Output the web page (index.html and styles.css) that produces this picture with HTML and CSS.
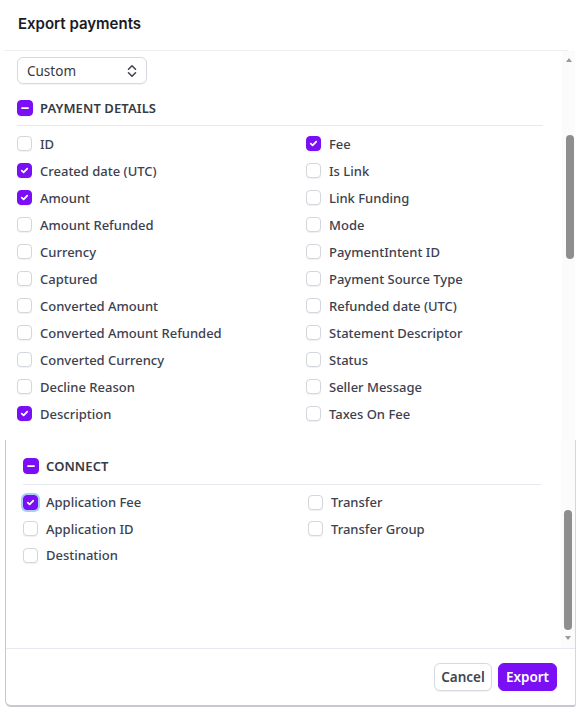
FILE: index.html
```html
<!DOCTYPE html>
<html>
<head>
<meta charset="utf-8">
<link rel="stylesheet" href="styles.css">
</head>
<body>
<div class="page">
  <div class="header"><h1 class="title">Export payments</h1></div>
  <div class="top">
    <div class="top-content">
      <div class="select">
        <span>Custom</span>
        <svg class="chev" width="12" height="14" viewBox="0 0 12 14"><path d="M2.5 5.2 6 1.8l3.5 3.4M2.5 8.8 6 12.2l3.5-3.4" fill="none" stroke="#414552" stroke-width="1.6" stroke-linecap="round" stroke-linejoin="round"/></svg>
      </div>
      <div class="section-head">
        <span class="box minus"><svg width="16" height="16" viewBox="0 0 16 16"><path d="M4.5 8h7" stroke="#fff" stroke-width="2" stroke-linecap="round"/></svg></span>
        <span class="section-title">PAYMENT DETAILS</span>
      </div>
      <div class="rule"></div>
      <div class="grid top-grid">
        <div class="col">
          <label class="row"><span class="box"></span>ID</label>
          <label class="row"><span class="box on"><svg width="15" height="15" viewBox="0 0 15 15"><path d="M4.3 7.6l2.2 2.1 4.2-4.4" fill="none" stroke="#fff" stroke-width="2" stroke-linecap="round" stroke-linejoin="round"/></svg></span>Created date (UTC)</label>
          <label class="row"><span class="box on"><svg width="15" height="15" viewBox="0 0 15 15"><path d="M4.3 7.6l2.2 2.1 4.2-4.4" fill="none" stroke="#fff" stroke-width="2" stroke-linecap="round" stroke-linejoin="round"/></svg></span>Amount</label>
          <label class="row"><span class="box"></span>Amount Refunded</label>
          <label class="row"><span class="box"></span>Currency</label>
          <label class="row"><span class="box"></span>Captured</label>
          <label class="row"><span class="box"></span>Converted Amount</label>
          <label class="row"><span class="box"></span>Converted Amount Refunded</label>
          <label class="row"><span class="box"></span>Converted Currency</label>
          <label class="row"><span class="box"></span>Decline Reason</label>
          <label class="row"><span class="box on"><svg width="15" height="15" viewBox="0 0 15 15"><path d="M4.3 7.6l2.2 2.1 4.2-4.4" fill="none" stroke="#fff" stroke-width="2" stroke-linecap="round" stroke-linejoin="round"/></svg></span>Description</label>
        </div>
        <div class="col">
          <label class="row"><span class="box on"><svg width="15" height="15" viewBox="0 0 15 15"><path d="M4.3 7.6l2.2 2.1 4.2-4.4" fill="none" stroke="#fff" stroke-width="2" stroke-linecap="round" stroke-linejoin="round"/></svg></span>Fee</label>
          <label class="row"><span class="box"></span>Is Link</label>
          <label class="row"><span class="box"></span>Link Funding</label>
          <label class="row"><span class="box"></span>Mode</label>
          <label class="row"><span class="box"></span>PaymentIntent ID</label>
          <label class="row"><span class="box"></span>Payment Source Type</label>
          <label class="row"><span class="box"></span>Refunded date (UTC)</label>
          <label class="row"><span class="box"></span>Statement Descriptor</label>
          <label class="row"><span class="box"></span>Status</label>
          <label class="row"><span class="box"></span>Seller Message</label>
          <label class="row"><span class="box"></span>Taxes On Fee</label>
        </div>
      </div>
    </div>
    <div class="scrollbar top-bar">
      <span class="arrow up"></span>
      <span class="thumb top-thumb"></span>
    </div>
  </div>
  <div class="bottom">
    <div class="bottom-scroll">
      <div class="bottom-content">
        <div class="section-head">
          <span class="box minus"><svg width="16" height="16" viewBox="0 0 16 16"><path d="M4.5 8h7" stroke="#fff" stroke-width="2" stroke-linecap="round"/></svg></span>
          <span class="section-title">CONNECT</span>
        </div>
        <div class="rule rule-b"></div>
        <div class="grid bottom-grid">
          <div class="col">
            <label class="row rb"><span class="box on focus"><svg width="15" height="15" viewBox="0 0 15 15"><path d="M4.3 7.6l2.2 2.1 4.2-4.4" fill="none" stroke="#fff" stroke-width="2" stroke-linecap="round" stroke-linejoin="round"/></svg></span>Application Fee</label>
            <label class="row rb"><span class="box"></span>Application ID</label>
            <label class="row rb"><span class="box"></span>Destination</label>
          </div>
          <div class="col">
            <label class="row rb"><span class="box"></span>Transfer</label>
            <label class="row rb"><span class="box"></span>Transfer Group</label>
          </div>
        </div>
      </div>
      <div class="scrollbar bottom-bar">
        <span class="thumb bottom-thumb"></span>
        <span class="arrow down"></span>
      </div>
    </div>
    <div class="footer">
      <button class="btn cancel">Cancel</button>
      <button class="btn export">Export</button>
    </div>
  </div>
</div>
</body>
</html>
```
FILE: styles.css
```css
* { box-sizing: border-box; }
html, body { margin: 0; padding: 0; background: #fff; }
body { width: 581px; height: 714px; overflow: hidden; font-family: "Noto Sans", "Open Sans", sans-serif; color: #414552; }
.page { width: 581px; }

.header { height: 51px; margin-left: 4px; width: 564px; border-bottom: 1px solid #eceef2; padding: 14px 0 0 14px; }
.title { margin: 0; font-family: Inter, "Noto Sans", sans-serif; font-size: 15px; font-weight: 600; color: #1a1b25; line-height: 19px; }

.top { display: flex; height: 389px; }
.top-content { width: 562px; padding-left: 17px; }
.scrollbar { width: 13px; background: #fbfbfb; display: flex; flex-direction: column; align-items: center; }
.top-bar { padding-top: 7px; }
.arrow { width: 0; height: 0; border-left: 3.5px solid transparent; border-right: 3.5px solid transparent; }
.arrow.up { border-bottom: 4px solid #9a9a9a; }
.arrow.down { border-top: 4px solid #9a9a9a; margin-top: 6px; }
.thumb { width: 8px; border-radius: 4px; background: #8e8e8e; }
.top-thumb { height: 124px; margin-top: 73px; margin-left: 3px; }

.select { margin-top: 6px; width: 130px; height: 27px; border: 1px solid #d6d9de; border-radius: 6px; display: flex; align-items: center; justify-content: space-between; padding: 0 8px 0 9px; font-family: "Noto Sans", sans-serif; font-size: 13.5px; color: #353a44; box-shadow: 0 1px 1px rgba(0,0,0,0.05); }
.chev { display: block; }

.section-head { display: flex; align-items: center; height: 22px; margin-top: 13px; }
.section-title { font-size: 13px; font-weight: 600; color: #353a44; margin-left: 7px; letter-spacing: 0.1px; }
.box { width: 15px; height: 15px; border-radius: 4px; border: 1px solid #d3d6dc; background: #fff; flex: none; display: flex; align-items: center; justify-content: center; box-shadow: 0 1px 1px rgba(0,0,0,0.06); }
.box svg { display: block; }
.box.on { background: #7a0ff5; border-color: #7a0ff5; }
.box.minus { width: 16px; height: 16px; background: #7a0ff5; border-color: #7a0ff5; }
.box.focus { box-shadow: 0 0 0 2px #a9cdf7; }

.rule { margin-top: 6px; width: 526px; height: 1px; background: #e6e9ef; }
.grid { display: grid; }
.top-grid { grid-template-columns: 289px 237px; margin-top: 4px; }
.row { display: flex; align-items: center; height: 27px; font-size: 13px; font-weight: 500; color: #3c4150; }
.row .box { margin-right: 8px; }

.bottom { margin-left: 5px; width: 571px; border-left: 1px solid #bfcfc6; border-right: 1px solid #d3d6da; border-bottom: 2px solid #c6c9ce; border-bottom-left-radius: 6px; border-bottom-right-radius: 3px; }
.bottom-scroll { display: flex; height: 208px; }
.bottom-content { width: 556px; padding-left: 17px; padding-top: 15px; }
.section-head:first-child { margin-top: 0; }
.rule-b { margin-top: 7px; width: 518px; }
.bottom-grid { grid-template-columns: 285px 233px; margin-top: 4px; }
.row.rb { height: 26.5px; }
.bottom-bar { padding-top: 70px; align-items: center; width: 14px; }
.bottom-thumb { height: 120px; }

.footer { border-top: 1px solid #e6e9ef; height: 57px; display: flex; justify-content: flex-end; align-items: flex-start; padding: 14px 18px 0 0; gap: 6px; }
.btn { height: 28px; border-radius: 6px; font-family: "Noto Sans", sans-serif; font-size: 13.5px; font-weight: 600; padding: 0; cursor: pointer; }
.cancel { width: 58px; background: #fff; border: 1px solid #d6d9de; color: #414552; box-shadow: 0 1px 1px rgba(0,0,0,0.06); }
.export { width: 59px; background: #7a0ff5; border: 1px solid #7a0ff5; color: #fff; }
```
